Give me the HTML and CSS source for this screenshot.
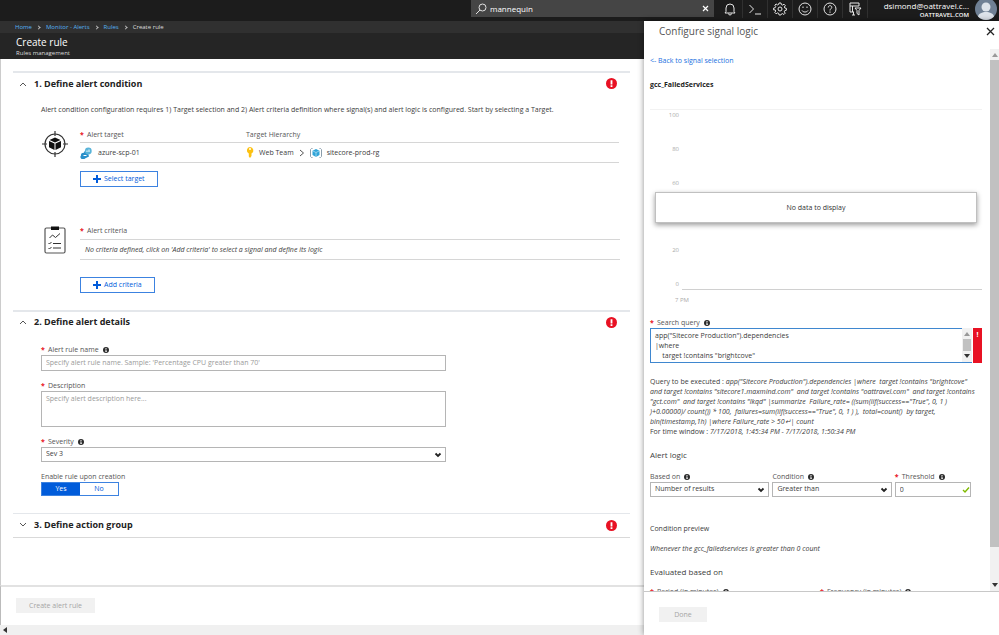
FILE: index.html
```
<!DOCTYPE html>
<html lang="en">
<head>
<meta charset="utf-8">
<title>Create rule</title>
<link rel="stylesheet" href="styles.css">
</head>
<body>
<svg class="defs" aria-hidden="true">
  <symbol id="info" viewBox="0 0 12 12"><circle cx="6" cy="6" r="6" fill="#2b2b2b"/><path d="M5 2h2v2H5zM4.500 5H7v4h1v1H4.500V9H5V6h-.5z" fill="#fff"/></symbol>
  <symbol id="error" viewBox="0 0 12 12"><circle cx="6" cy="6" r="6" fill="#e81123"/><path d="M5 2.500h2v4.500H5zM5 8h2v1.800H5z" fill="#fff"/></symbol>
  <symbol id="down" viewBox="0 0 8 6"><path d="M1.500 1.500L4 4l2.500-2.500" fill="none" stroke="#222" stroke-width="1.800"/></symbol>
  <symbol id="plus" viewBox="0 0 8 8"><path d="M4 0v8M0 4h8" stroke="#015cda" stroke-width="2"/></symbol>
</svg>

<header class="topbar">
  <div class="search">
    <svg width="12" height="12" viewBox="0 0 12 12" fill="none" stroke="#e0e0e0"><circle cx="7.500" cy="4.500" r="3.500"/><path d="M5 7L1 11"/></svg>
    <input type="text" aria-label="Search resources" value="mannequin">
    <button type="button" aria-label="Clear"><svg width="7" height="7" viewBox="0 0 7 7"><path d="M1 1l5 5M6 1L1 6" stroke="#fff" stroke-width="1.200"/></svg></button>
  </div>
  <nav class="tools" aria-label="Portal tools">
    <button type="button" aria-label="Notifications" class="bell"><svg viewBox="0 0 14 14"><path d="M2 11h10l-1-1.500V6a4 4 0 0 0-8 0v3.500zM5.500 11.500a1.500 1.500 0 0 0 3 0"/></svg></button>
    <button type="button" aria-label="Cloud shell"><svg viewBox="0 0 14 14"><path d="M1.500 3l4 4-4 4M7 12h6"/></svg></button>
    <button type="button" aria-label="Settings"><svg viewBox="0 0 14 14"><path d="M6 1h2l.4 1.600 1.200.5L11 2.200 12.300 3.500 11.400 5l.4 1 1.600.4v1.800l-1.600.4-.5 1.200.9 1.400-1.300 1.300-1.400-.9-1.200.5L7.900 13H6.100l-.4-1.600-1.200-.5-1.400.9-1.300-1.300.9-1.400-.5-1.200L.6 7.900V6.100l1.600-.4.5-1.200-.9-1.300L3.100 2l1.400.9 1.100-.4z"/><circle cx="7" cy="7" r="2"/></svg></button>
    <button type="button" aria-label="Feedback"><svg viewBox="0 0 14 14"><circle cx="7" cy="7" r="6"/><path d="M4 8.500c1.200 2 4.800 2 6 0M5 4.500v1.500M9 4.500v1.500"/></svg></button>
    <button type="button" aria-label="Help"><svg viewBox="0 0 14 14"><circle cx="7" cy="7" r="6"/><path d="M5.200 5.500c0-2.400 3.600-2.400 3.600-.2C8.800 6.700 7 6.700 7 8.500M7 9.500v1.300"/></svg></button>
    <button type="button" aria-label="Directory and subscription filter"><svg viewBox="0 0 14 14"><path d="M11 4V1H2v9h4M2 4h9M4.500 4v6M4 13h3M5.500 10v3M7 6h6l-2 2.500V13L9 11.500v-3z"/></svg></button>
  </nav>
  <div class="user">
    <div class="who"><span>dsimond@oattravel.c...</span><small>OATTRAVEL.COM</small></div>
    <svg width="22" height="21" viewBox="0 0 22 21"><circle cx="11" cy="9" r="11" fill="#6f8094"/><circle cx="11" cy="7" r="4.500" fill="#dde3ea"/><path d="M3 16.500c1-6 15-6 16 0a11 11 0 0 1-16 0z" fill="#dde3ea"/></svg>
  </div>
</header>

<div class="workspace">
<main class="rule">
  <nav class="crumbs" aria-label="Breadcrumb">
    <a href="#">Home</a><i></i><a href="#">Monitor - Alerts</a><i></i><a href="#">Rules</a><i></i><span>Create rule</span>
  </nav>
  <div class="title"><h1>Create rule</h1><p>Rules management</p></div>

  <div class="content">
    <section class="step">
      <h2><svg class="chev" viewBox="0 0 8 6"><path d="M1 5l3-3 3 3"/></svg>1. Define alert condition<svg class="err"><use href="#error"/></svg></h2>
      <p class="intro">Alert condition configuration requires 1) Target selection and 2) Alert criteria definition where signal(s) and alert logic is configured. Start by selecting a Target.</p>
      <div class="block">
        <svg class="pic" width="28" height="28" viewBox="0 0 28 28"><g fill="none" stroke="#333" stroke-width="1.200"><circle cx="14" cy="14" r="10"/><path d="M14 1v5M14 22v5M1 14h5M22 14h5"/></g><path d="M14 7.500l5.500 2.500-5.500 2.500L8.500 10zM8 11l5.500 2.500v6.500L8 17.200zM20 11l-5.500 2.500v6.500l5.500-2.800z" fill="#111"/></svg>
        <div class="fill">
          <table>
            <thead><tr><th class="first"><b class="req">*</b>Alert target</th><th>Target Hierarchy</th></tr></thead>
            <tbody><tr>
              <td><span class="cell"><svg width="12" height="12" viewBox="0 0 12 12"><path d="M1 8.500a2.500 2.500 0 0 1 3-2.800C4.500 3 7 3 7.500 4L9 9.500 5 11.500a2.500 2.500 0 0 1-4-3z" fill="#2a8fc9"/><circle cx="8.300" cy="4" r="3.400" fill="#59b4d9"/><path d="M3.500 8.500h3M7 5V3.500M9 5V2.500" stroke="#fff" fill="none"/></svg><span class="name">azure-scp-01</span></span></td>
              <td><span class="cell"><svg width="8" height="11" viewBox="0 0 8 11"><path d="M4 0a3.500 3.500 0 0 1 1.500 6.600V9L4 11 2.800 9.500V6.600A3.500 3.500 0 0 1 4 0z" fill="#fcc112"/><circle cx="4" cy="2" r="1" fill="#fff"/></svg><span>Web Team</span><svg width="6" height="8" viewBox="0 0 6 8"><path d="M1 1l3.500 3L1 7" fill="none" stroke="#555"/></svg><svg width="12" height="10" viewBox="0 0 12 10"><path d="M2.500.5h-1l-1 1v7l1 1h1M9.500.5h1l1 1v7l-1 1h-1" fill="none" stroke="#8a9dab"/><path d="M6 1l3.500 1.700v4.300L6 9 2.500 7V2.700z" fill="#2fa4d8"/><path d="M2.500 2.800L6 4.500l3.500-1.700M6 4.500V9" stroke="#d5edf8" fill="none" stroke-width=".6"/></svg><span>sitecore-prod-rg</span></span></td>
            </tr></tbody>
          </table>
          <button type="button" class="btn"><svg><use href="#plus"/></svg>Select target</button>
        </div>
      </div>
      <div class="block criteria">
        <svg class="pic" width="28" height="28" viewBox="0 0 28 28"><rect x="4" y="2" width="20" height="25" rx="1.500" fill="none" stroke="#555" stroke-width="1.200"/><path d="M10 .5h8v3.500h-8z" fill="#111"/><path d="M8.500 12l3-3 3 2.500 4.500-4M7.500 17l1 1 2-2M7.500 22l1 1 2-2M12 17.500h8M12 22h8" fill="none" stroke="#333"/></svg>
        <div class="fill">
          <div class="lab"><b class="req">*</b>Alert criteria</div>
          <p class="none">No criteria defined, click on 'Add criteria' to select a signal and define its logic</p>
          <button type="button" class="btn"><svg><use href="#plus"/></svg>Add criteria</button>
        </div>
      </div>
    </section>

    <section class="step">
      <h2><svg class="chev" viewBox="0 0 8 6"><path d="M1 5l3-3 3 3"/></svg>2. Define alert details<svg class="err"><use href="#error"/></svg></h2>
      <div class="form">
        <div class="field"><label for="rn"><b class="req">*</b>Alert rule name<svg class="info"><use href="#info"/></svg></label>
          <input id="rn" type="text" placeholder="Specify alert rule name. Sample: 'Percentage CPU greater than 70'"></div>
        <div class="field"><label for="ds"><b class="req">*</b>Description</label>
          <textarea id="ds" placeholder="Specify alert description here..."></textarea></div>
        <div class="field"><label for="sv"><b class="req">*</b>Severity<svg class="info"><use href="#info"/></svg></label>
          <div class="select"><select id="sv"><option>Sev 3</option></select><svg><use href="#down"/></svg></div></div>
        <div class="field"><span class="lbl" id="en">Enable rule upon creation</span>
          <div class="toggle" role="group" aria-labelledby="en"><button type="button" class="on">Yes</button><button type="button">No</button></div></div>
      </div>
    </section>

    <section class="step closed">
      <h2><svg class="chev" viewBox="0 0 8 6"><path d="M1 1l3 3 3-3"/></svg>3. Define action group<svg class="err"><use href="#error"/></svg></h2>
    </section>
  </div>

  <footer class="actions"><button type="button" class="off" disabled>Create alert rule</button></footer>
  <div class="hscroll"><svg width="4" height="6" viewBox="0 0 4 6"><path d="M4 0v6L0 3z" fill="#333"/></svg></div>
</main>

<aside class="blade">
  <div class="bladehead"><h2>Configure signal logic</h2><button type="button" aria-label="Close"><svg width="9" height="9" viewBox="0 0 9 9"><path d="M1 1l7 7M8 1L1 8" stroke="#222" stroke-width="1.300"/></svg></button></div>
  <div class="scroller">
    <div class="inner">
      <a class="back" href="#">&lt;- Back to signal selection</a>
      <h3 class="signal">gcc_FailedServices</h3>
      <div class="chart">
        <ol><li>100</li><li>80</li><li>60</li><li>40</li><li>20</li><li>0</li></ol>
        <div class="time">7 PM</div>
        <div class="nodata">No data to display</div>
      </div>
      <label class="lab2" for="sq"><b class="req">*</b>Search query<svg class="info"><use href="#info"/></svg></label>
      <div class="query">
        <textarea id="sq" wrap="off">app("Sitecore Production").dependencies
|where
    target !contains "brightcove"</textarea>
        <div class="mini"><svg viewBox="0 0 6 4"><path d="M0 4h6L3 0z" fill="#999"/></svg><span></span><svg viewBox="0 0 6 4"><path d="M0 0h6L3 4z" fill="#333"/></svg></div>
        <div class="bad">!</div>
      </div>
      <p class="exec">Query to be executed : <em>app("Sitecore Production").dependencies |where&nbsp; target !contains "brightcove"<br>and target !contains "sitecore1.maxmind.com"&nbsp; and target !contains "oattravel.com"&nbsp; and target !contains<br>"gct.com"&nbsp; and target !contains "lkqd" |summarize&nbsp; Failure_rate= ((sum(iif(success=="True", 0, 1 )<br>)+0.00000)/ count()) * 100,&nbsp; failures=sum(iif(success=="True", 0, 1 ) ),&nbsp; total=count()&nbsp; by target,<br>bin(timestamp,1h) |where Failure_rate &gt; 50↵| count</em><br>For time window : <em>7/17/2018, 1:45:34 PM - 7/17/2018, 1:50:34 PM</em></p>
      <h3 class="sub">Alert logic</h3>
      <div class="logic">
        <div class="field wide"><label for="bo">Based on<svg class="info"><use href="#info"/></svg></label><div class="select"><select id="bo"><option>Number of results</option></select><svg><use href="#down"/></svg></div></div>
        <div class="field wide"><label for="cn">Condition<svg class="info"><use href="#info"/></svg></label><div class="select"><select id="cn"><option>Greater than</option></select><svg><use href="#down"/></svg></div></div>
        <div class="field"><label for="th"><b class="req">*</b>Threshold<svg class="info"><use href="#info"/></svg></label><div class="select valid"><input id="th" type="text" value="0"><svg viewBox="0 0 8 6"><path d="M1 3l2 2 4-4.500" fill="none" stroke="#7fba00" stroke-width="1.400"/></svg></div></div>
      </div>
      <p class="cp">Condition preview</p>
      <p class="when">Whenever the gcc_failedservices is greater than 0 count</p>
      <h3 class="sub eval">Evaluated based on</h3>
      <div class="pair"><span><b class="req">*</b>Period (in minutes)<svg class="info"><use href="#info"/></svg></span><span><b class="req">*</b>Frequency (in minutes)<svg class="info"><use href="#info"/></svg></span></div>
    </div>
    <div class="vscroll"><svg viewBox="0 0 6 4"><path d="M0 4h6L3 0z" fill="#999"/></svg><span></span><svg viewBox="0 0 6 4"><path d="M0 0h6L3 4z" fill="#333"/></svg></div>
  </div>
  <footer><button type="button" class="off" disabled>Done</button></footer>
</aside>
</div>
</body>
</html>
```
FILE: styles.css
```
* { box-sizing: border-box; margin: 0; padding: 0; }
html, body { height: 100%; }
body {
  display: flex; flex-direction: column; overflow: hidden;
  font: 7px/10px "Open Sans", "Noto Sans", sans-serif; color: #3c3c3c; background: #fff;
}
button, input, select, textarea { font: inherit; color: inherit; border: 0; border-radius: 0; background: none; appearance: none; outline: 0; }
a { text-decoration: none; }
svg { display: block; flex: none; }
.defs { position: absolute; width: 0; height: 0; }
.info { width: 6px; height: 6px; margin-left: 4px; }
.req { color: #e81123; font-weight: 700; width: 7px; flex: none; }

/* top bar */
.topbar { display: flex; flex: none; justify-content: flex-end; height: 21px; background: #1c1c1c; color: #fff; }
.search { display: flex; align-items: center; width: 243px; height: 17px; padding: 0 5px 0 4px; gap: 3px; background: #454545; font-size: 8px; }
.search input { flex: 1; min-width: 0; height: 17px; }
.search button { width: 7px; height: 7px; }
.tools { display: flex; height: 18px; }
.tools button { display: flex; align-items: center; justify-content: center; width: 25px; border-right: 1px solid #303030; }
.tools .bell { width: 29px; padding-left: 3px; }
.tools svg { width: 14px; height: 14px; fill: none; stroke: #e6e6e6; }
.user { display: flex; justify-content: flex-end; width: 131px; padding-right: 2px; gap: 6px; }
.who { display: flex; flex-direction: column; align-items: flex-end; padding-top: 1px; font-size: 8px; line-height: 10px; }
.who small { font-size: 6px; font-weight: 600; line-height: 9px; }

.workspace { display: flex; flex: 1; min-height: 0; }
.rule { display: flex; flex: 1; flex-direction: column; min-width: 0; }
.crumbs { display: flex; flex: none; align-items: center; height: 12px; padding-left: 15px; font-size: 6px; background: #303030; color: #ddd; }
.crumbs a { color: #56b0f0; }
.crumbs i { width: 3px; height: 3px; margin: 0 6px 0 5px; border: solid #bbb; border-width: 1px 1px 0 0; rotate: 45deg; }
.title { flex: none; height: 26px; padding: 3px 16px; background: #252525; color: #fff; }
.title h1 { font-size: 10px; font-weight: 400; line-height: 12px; }
.title p { font-size: 6px; line-height: 10px; color: #ddd; }

.content { flex: 1; min-height: 0; overflow: hidden; padding: 12px 14px 0 12px; border-left: 1px solid #ccc; }
.step { border-top: 2px solid #e4e7eb; }
.step h2 { display: flex; align-items: center; height: 21px; padding: 0 13px 0 6px; font-size: 9px; color: #222; }
.chev { width: 8px; height: 6px; margin-right: 7px; fill: none; stroke: #555; }
.err { width: 11px; height: 11px; margin-left: auto; }
.intro { margin: 11px 0 14px 28px; }
.block { display: flex; gap: 11px; padding-left: 28px; padding-right: 11px; }
.pic { margin-top: 1px; }
.fill { flex: 1; min-width: 0; }
table { width: 100%; border-collapse: collapse; table-layout: fixed; }
th { height: 13px; padding-top: 1px; font-weight: 400; text-align: left; vertical-align: top; color: #555; }
th.first { width: 166px; }
th .req { display: inline-block; }
td { height: 20px; padding-top: 1px; border: solid #d6d6d6; border-width: 1px 0; }
.cell { display: flex; align-items: center; gap: 5px; }
.cell .name { padding-left: 1px; }
.btn { display: flex; align-items: center; height: 16px; margin-top: 8px; padding: 1px 12px 0; gap: 3px; border: 1px solid #3c82e0; color: #015cda; }
.btn svg { width: 8px; height: 8px; }
.criteria { margin: 38px 0 17px; padding-right: 10px; }
.criteria .btn { margin-top: 17px; }
.lab { display: flex; height: 14px; padding-top: 1px; color: #555; }
.none { padding: 5px 5px 4px; border: solid #d6d6d6; border-width: 1px 0; font-style: italic; }

.form { display: flex; flex-direction: column; gap: 10px; max-width: 433px; padding: 12px 0 17px 28px; }
.field label, .lbl, .lab2, .pair span { display: flex; align-items: center; height: 10px; color: #555; }
.field input, .field textarea, .field select { display: block; width: 100%; height: 15px; padding: 0 4px; border: 1px solid #b5b5b5; background: #fff; }
.form input { height: 16px; }
.field textarea { height: 36px; padding: 2px 4px; resize: none; }
::placeholder { color: #9a9a9a; opacity: 1; }
.select { position: relative; }
.select svg { position: absolute; right: 4px; top: 5px; width: 8px; height: 6px; }
.valid svg { right: 1px; }
.toggle { display: flex; width: 78px; height: 14px; border: 1px solid #3c82e0; }
.toggle button { flex: 1; color: #015cda; }
.toggle .on { background: #015cda; color: #fff; }
.closed { border-top-width: 1px; border-bottom: 1px solid #d9d9d9; }
.closed h2 { height: 23px; }
.actions { flex: none; height: 40px; padding: 11px 16px; border-top: 2px solid #e2e2e2; border-left: 1px solid #bbb; }
.actions .off { width: 79px; margin-left: -1px; }
.off { height: 15px; background: #f1f1f1; color: #a5a5a5; }
.hscroll { display: flex; flex: none; align-items: center; height: 10px; padding-left: 3px; background: #f0f0f0; }

/* signal blade */
.blade { display: flex; position: relative; flex-direction: column; flex: 0 0 355px; background: #fff; box-shadow: 0 0 6px rgba(0,0,0,.45); }
.bladehead { display: flex; flex: none; justify-content: space-between; height: 28px; padding: 3px 4px 0 15px; }
.bladehead h2 { font-size: 10px; font-weight: 400; line-height: 14px; color: #555; }
.bladehead button { height: 14px; }
.scroller { display: flex; flex: 1; min-height: 0; }
.inner { flex: 1; min-width: 0; overflow: hidden; padding: 7px 8px 0 6px; }
.back { display: block; color: #1a6fe0; }
.signal { margin-top: 14px; font-size: 7px; font-weight: 700; color: #222; }
.chart { position: relative; margin-top: 19px; border-top: 1px solid #f2f2f2; color: #aaa; font-size: 6px; }
.chart ol { display: flex; flex-direction: column; justify-content: space-between; height: 179px; padding-right: 303px; list-style: none; text-align: right; }
.time { height: 26px; margin-left: 32px; padding-top: 5px; border-top: 1px solid #d0d0d0; text-indent: -7px; }
.nodata { position: absolute; top: 82px; left: 5px; right: 5px; padding: 9px; height: 31px; border: 1px solid #c0c0c0; background: #fff; box-shadow: 0 2px 5px rgba(0,0,0,.4); text-align: center; text-indent: 0; font-size: 7px; line-height: 12px; color: #333; }
.lab2 { margin-top: 3px; }
.query { display: flex; height: 35px; }
.query textarea { flex: 1; min-width: 0; padding: 2px 4px; border: 1px solid #3f87cf; border-right: 0; resize: none; overflow: hidden; white-space: pre; }
.mini { display: flex; flex-direction: column; align-items: center; justify-content: space-between; width: 10px; padding: 4px 0; border-bottom: 1px solid #3f87cf; background: #f1f1f1; }
.mini svg, .vscroll svg { width: 6px; height: 4px; }
.mini span { width: 8px; height: 12px; background: #c1c1c1; }
.bad { width: 9px; margin-left: 1px; padding-top: 2px; background: #e81123; color: #fff; font-weight: 700; text-align: center; }
.exec { margin-top: 14px; white-space: nowrap; }
.sub { margin-top: 12px; font-size: 8px; font-weight: 400; line-height: 12px; }
.logic { display: flex; gap: 3px; margin-top: 11px; padding-right: 11px; }
.logic .field { flex: 76; }
.logic .wide { flex: 119; }
.logic select { padding-bottom: 1px; }
.cp { margin-top: 27px; }
.when { margin-top: 10px; font-style: italic; }
.eval { margin-top: 12px; }
.pair { display: flex; gap: 8px; margin-top: 9px; }
.pair span { flex: 1; }
.vscroll { display: flex; flex: none; flex-direction: column; align-items: center; width: 9px; padding: 4px 0; gap: 3px; background: #f1f1f1; }
.vscroll span { flex: 1; width: 9px; margin-bottom: 33px; background: #c1c1c1; }
.blade footer { flex: none; height: 44px; padding: 15px; border-top: 1px solid #c8c8c8; }
.blade .off { width: 48px; }
```
